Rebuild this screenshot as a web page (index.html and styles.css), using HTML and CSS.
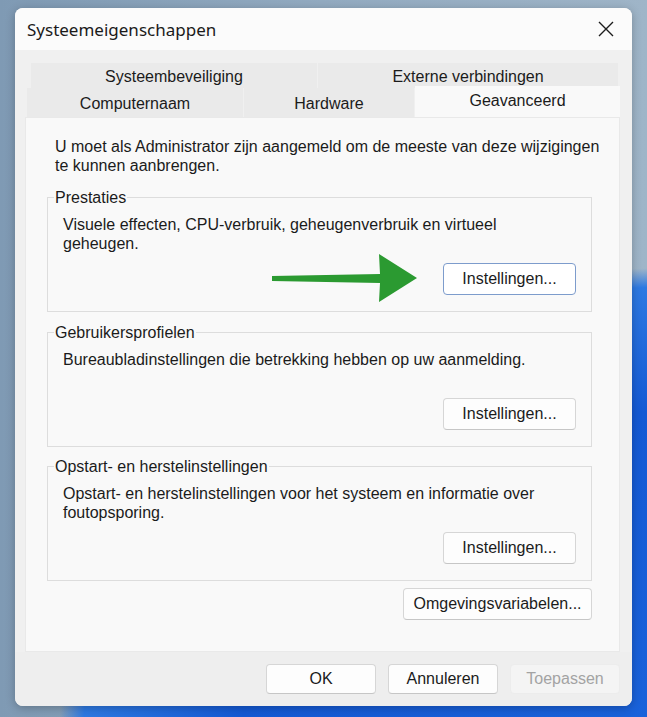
FILE: index.html
```html
<!DOCTYPE html>
<html lang="nl">
<head>
    <meta charset="UTF-8">
    <meta name="viewport" content="width=device-width, initial-scale=1.0">
    <title>Systeemeigenschappen</title>
    <link rel="stylesheet" href="styles.css">
</head>
<body>
    <div class="window">
        <div class="titlebar">
            <span class="title">Systeemeigenschappen</span>
            <svg class="close" width="16" height="16" viewBox="0 0 16 16">
                <path d="M1 1 L15 15 M15 1 L1 15" stroke="#1c1c1c" stroke-width="1.4" fill="none"/>
            </svg>
        </div>

        <div class="content">
            <div class="tabs">
                <div class="tab-row back">
                    <div class="tab tab-sys">Systeembeveiliging</div>
                    <div class="tab tab-ext">Externe verbindingen</div>
                </div>
                <div class="tab-row front">
                    <div class="tab tab-comp">Computernaam</div>
                    <div class="tab tab-hw">Hardware</div>
                    <div class="tab tab-adv active">Geavanceerd</div>
                </div>
            </div>

            <div class="panel">
                <p class="intro">U moet als Administrator zijn aangemeld om de meeste van deze wijzigingen te kunnen aanbrengen.</p>

                <fieldset class="group group-perf">
                    <legend>Prestaties</legend>
                    <p class="desc">Visuele effecten, CPU-verbruik, geheugenverbruik en virtueel geheugen.</p>
                    <div class="actions">
                        <svg class="arrow" width="146" height="48" viewBox="0 0 146 48">
                            <polygon points="0,22 108,20 107,0 145,24 107,48 108,29 0,27" fill="#2b9a31"/>
                        </svg>
                        <button class="btn btn-settings default">Instellingen...</button>
                    </div>
                </fieldset>

                <fieldset class="group group-profiles">
                    <legend>Gebruikersprofielen</legend>
                    <p class="desc">Bureaubladinstellingen die betrekking hebben op uw aanmelding.</p>
                    <div class="actions">
                        <button class="btn btn-settings">Instellingen...</button>
                    </div>
                </fieldset>

                <fieldset class="group group-startup">
                    <legend>Opstart- en herstelinstellingen</legend>
                    <p class="desc">Opstart- en herstelinstellingen voor het systeem en informatie over foutopsporing.</p>
                    <div class="actions">
                        <button class="btn btn-settings">Instellingen...</button>
                    </div>
                </fieldset>

                <div class="env-row">
                    <button class="btn btn-env">Omgevingsvariabelen...</button>
                </div>
            </div>
        </div>

        <div class="footer">
            <button class="btn btn-footer">OK</button>
            <button class="btn btn-footer">Annuleren</button>
            <button class="btn btn-footer" disabled>Toepassen</button>
        </div>
    </div>
</body>
</html>
```

FILE: styles.css
```css
* {
    box-sizing: border-box;
}

body {
    margin: 0;
    width: 647px;
    height: 717px;
    overflow: hidden;
    font-family: 'Liberation Sans', Arial, sans-serif;
    font-size: 16px;
    line-height: 19px;
    color: #1b1b1b;
    background:
        radial-gradient(ellipse 610px 480px at 668px 748px, #1a63db 0%, #1459d4 70%, #2d79e2 96%, rgba(45, 121, 226, 0) 100%),
        linear-gradient(to right, #7f9ab4 0%, #93abc1 50%, #9fb5c8 100%);
}

.window {
    margin: 8px 0 0 15px;
    width: 617px;
    height: 698px;
    display: flex;
    flex-direction: column;
    background-color: #f0f0f0;
    border-radius: 8px;
    overflow: hidden;
    box-shadow: 0 2px 10px rgba(0, 0, 0, 0.25);
}

/* title bar */
.titlebar {
    height: 42px;
    flex-shrink: 0;
    display: flex;
    align-items: center;
    justify-content: space-between;
    padding: 0 18px 0 12px;
    background-color: #fbfbfb;
}

.title {
    font-family: 'Noto Sans', sans-serif;
    font-size: 17px;
    color: #1a1a1a;
}

.close {
    display: block;
}

/* tabs + panel */
.content {
    padding: 13px 12px 0 10px;
}

.tab-row {
    display: flex;
    gap: 1px;
}

.tab-row.back {
    height: 25px;
    margin-left: 6px;
}

.tab-row.front {
    height: 29px;
    margin-left: 2px;
    align-items: flex-end;
}

.tab {
    display: flex;
    align-items: center;
    justify-content: center;
    height: 100%;
    background-color: #eaeaea;
    color: #1b1b1b;
    padding-top: 2px;
}

.tab-sys { width: 286px; }
.tab-ext { width: 300px; }
.tab-comp { width: 216px; }
.tab-hw { width: 170px; }
.tab-adv { width: 205px; }

.tab.active {
    height: 31px;
    background-color: #f9f9f9;
    padding: 0 0 3px;
}

.panel {
    height: 535px;
    padding: 19px 27px 0 21px;
    background-color: #f9f9f9;
    border: 1px solid #e9e9e9;
}

.intro {
    margin: 0 -14px 0 8px;
}

.group {
    margin: 13px 0 0;
    padding: 8px 15px 16px 15px;
    border: 1px solid #dddddd;
    min-inline-size: 0;
}

.group legend {
    margin-left: -9px;
    padding: 0 1px;
    line-height: 19px;
}

.group-profiles {
    margin-top: 11px;
}

.group-startup {
    margin-top: 10px;
}

.desc {
    margin: 0;
    min-height: 38px;
}

.actions {
    position: relative;
    display: flex;
    justify-content: flex-end;
    margin-top: 10px;
}

.arrow {
    position: absolute;
    right: 158px;
    top: -9px;
}

/* buttons */
.btn {
    font-family: 'Liberation Sans', Arial, sans-serif;
    font-size: 16px;
    color: #1b1b1b;
    background-color: #fdfdfd;
    border: 1px solid #d6d6d6;
    border-bottom-color: #c6c6c6;
    border-radius: 4px;
    padding: 0;
}

.btn.default {
    background-color: #ffffff;
    border-color: #7d9ccc;
}

.btn:disabled {
    color: #a3a3a3;
    background-color: #f4f4f4;
    border-color: #ececec;
}

.btn-settings {
    width: 133px;
    height: 32px;
}

.env-row {
    display: flex;
    justify-content: flex-end;
    margin-top: 7px;
}

.btn-env {
    width: 189px;
    height: 32px;
}

/* bottom bar */
.footer {
    height: 54px;
    display: flex;
    justify-content: flex-end;
    gap: 12px;
    padding: 12px 12px 0;
    background-color: #eeeeee;
}

.btn-footer {
    width: 110px;
    height: 30px;
}
```
